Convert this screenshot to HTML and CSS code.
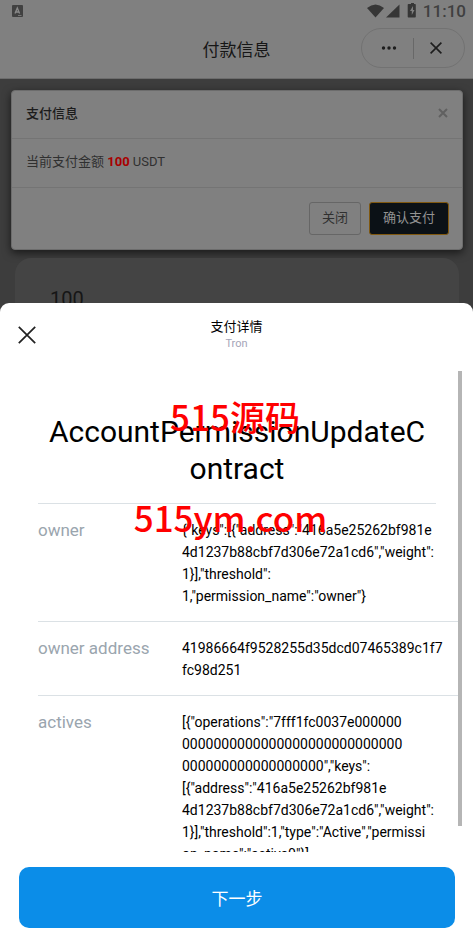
FILE: index.html
```html
<!DOCTYPE html>
<html lang="zh-CN">
<head>
<meta charset="utf-8">
<meta name="viewport" content="width=device-width, initial-scale=1">
<title>付款信息</title>
<link rel="stylesheet" href="styles.css">
</head>
<body>
<div class="page">
  <header class="top">
    <div class="status">
      <svg class="status-app" width="11" height="12" viewBox="0 0 11 12" aria-hidden="true"><rect width="11" height="12" rx="1" fill="#414141"/><path d="M3 8.5 5.3 3l2.3 5.500M3.800 7h3" fill="none" stroke="#8a8a8a" stroke-width="1.300"/><path d="M6 10.500h3.500" stroke="#777" stroke-width="1"/></svg>
      <svg width="50" height="16" viewBox="0 0 50 16" aria-hidden="true" fill="#363636"><path d="M0 5Q8.500-2 17 5L8.500 14.500Z"/><path d="M19 14.500h13.500V1.500Z"/><path d="M42 1h2V0h3v1h1q.8 0 .8.8v11.900q0 .8-.8.800h-6.500q-.8 0-.8-.8V1.800q0-.8.800-.8Z"/><path d="M46 3 43 8h1.800v4L47.500 7H46Z" fill="#808080"/></svg>
      <time class="clock">11:10</time>
    </div>
    <div class="nav">
      <h1 class="nav-title">付款信息</h1>
      <div class="capsule">
        <button class="icon-button" aria-label="更多"><svg width="16" height="4" viewBox="0 0 16 4" fill="#1d1d1d"><circle cx="2.500" cy="2" r="1.700"/><circle cx="8" cy="2" r="1.700"/><circle cx="13.500" cy="2" r="1.700"/></svg></button>
        <span class="capsule-line"></span>
        <button class="icon-button" aria-label="退出"><svg width="12" height="12" viewBox="0 0 12 12" fill="none" stroke="#1d1d1d" stroke-width="1.600"><path d="m.6.6 10.800 10.800M11.400.6.6 11.400"/></svg></button>
      </div>
    </div>
  </header>
  <main class="content">
    <section class="dialog">
      <div class="dialog-head">
        <h2 class="dialog-title">支付信息</h2>
        <button class="icon-button" aria-label="关闭对话框"><svg width="10" height="10" viewBox="0 0 10 10" fill="none" stroke="#606060" stroke-width="2"><path d="m1 1 8 8M9 1 1 9"/></svg></button>
      </div>
      <p class="dialog-body">当前支付金额 <strong class="amount">100</strong> USDT</p>
      <div class="dialog-foot">
        <button class="button">关闭</button>
        <button class="button button-primary">确认支付</button>
      </div>
    </section>
    <div class="card">100</div>
  </main>
</div>
<section class="sheet">
  <header class="sheet-head">
    <button class="icon-button" aria-label="关闭详情"><svg width="18" height="18" viewBox="0 0 18 18" fill="none" stroke="#222" stroke-width="1.700"><path d="m.8.8 16.400 16.400M17.200.8.8 17.200"/></svg></button>
    <div class="sheet-heading">
      <h2 class="sheet-title">支付详情</h2>
      <p class="sheet-sub">Tron</p>
    </div>
  </header>
  <div class="scroll">
    <div class="details">
      <h3 class="contract">AccountPermissionUpdateC<br>ontract</h3>
      <dl class="rows">
        <div class="row row-first">
          <dt class="label">owner</dt>
          <dd class="value">{"keys":[{"address":"416a5e25262bf981e<br>4d1237b88cbf7d306e72a1cd6","weight":<br>1}],"threshold":<br>1,"permission_name":"owner"}</dd>
        </div>
        <div class="row">
          <dt class="label">owner address</dt>
          <dd class="value">41986664f9528255d35dcd07465389c1f7<br>fc98d251</dd>
        </div>
        <div class="row">
          <dt class="label">actives</dt>
          <dd class="value">[{"operations":"7fff1fc0037e000000<br>0000000000000000000000000000<br>000000000000000000","keys":<br>[{"address":"416a5e25262bf981e<br>4d1237b88cbf7d306e72a1cd6","weight":<br>1}],"threshold":1,"type":"Active","permissi<br>on_name":"active0"}]</dd>
        </div>
      </dl>
    </div>
    <div class="thumb"></div>
  </div>
  <button class="next">下一步</button>
  <div class="mark mark-name">515源码</div>
  <div class="mark mark-site">515ym.com</div>
</section>
</body>
</html>
```
FILE: styles.css
```css
* { box-sizing: border-box; }
body {
  margin: 0;
  height: 100vh;
  display: flex;
  flex-direction: column;
  overflow: hidden;
  background: #3d3d3d;
  color: #000;
  font-family: Roboto, "Noto Sans CJK SC", sans-serif;
}
h1, h2, h3, p, dl, dd { margin: 0; font-weight: 400; }
button { font: inherit; cursor: pointer; }
.icon-button { display: flex; padding: 0; border: 0; background: none; }

.top { background: #808080; border-bottom: 1px solid #6c6c6c; }
.status { display: flex; align-items: center; height: 22px; padding: 0 7px 0 12px; }
.status-app { margin-right: auto; }
.clock { margin-left: 6px; font-size: 17px; font-weight: 500; line-height: 22px; color: #404040; }
.nav {
  display: grid;
  grid-template-columns: 1fr auto 1fr;
  align-items: center;
  height: 56px;
  padding: 0 8px 4px;
}
.nav-title { grid-column: 2; padding-top: 4px; font-size: 17px; line-height: 24px; color: #161616; }
.capsule {
  display: flex;
  align-items: center;
  justify-content: space-between;
  justify-self: end;
  width: 104px;
  height: 40px;
  padding: 0 22px 0 19px;
  border: 1px solid #727272;
  border-radius: 20px;
}
.capsule-line { width: 1px; height: 21px; background: #686868; }

.content { padding: 11px 10px 0 11px; }
.dialog {
  background: #808080;
  border: 1px solid #6c6c6c;
  border-radius: 4px;
  box-shadow: 0 3px 9px rgba(0, 0, 0, .6);
  font-size: 13px;
  color: #303030;
}
.dialog-head {
  display: flex;
  align-items: center;
  justify-content: space-between;
  height: 48px;
  padding: 0 14px 4px;
  border-bottom: 1px solid #747474;
}
.dialog-title { font-size: 13px; font-weight: 500; color: #1c1c1c; }
.dialog-body { padding: 12px 14px 14px; line-height: 22px; border-bottom: 1px solid #747474; }
.amount { font-weight: 700; color: #a80000; }
.dialog-foot { display: flex; justify-content: flex-end; gap: 8px; padding: 14px 13px; }
.button {
  height: 33px;
  padding: 0 12px 4px;
  border: 1px solid #666;
  border-radius: 3px;
  background: #808080;
  color: #303030;
}
.button-primary { padding: 0 13px 4px; border: 1px solid #80580f; background: #0b1116; color: #929292; }
.card {
  height: 56px;
  margin: 8px 4px 0;
  padding: 26px 35px 0;
  border-radius: 16px 16px 0 0;
  background: #444;
  overflow: hidden;
  font-size: 20px;
  line-height: 30px;
  color: #161616;
}

.sheet {
  position: relative;
  display: flex;
  flex: 1;
  flex-direction: column;
  min-height: 0;
  margin-top: -11px;
  padding-bottom: 16px;
  border-radius: 9px 9px 0 0;
  background: #fff;
}
.sheet-head {
  display: grid;
  grid-template-columns: 1fr auto 1fr;
  align-items: center;
  height: 63px;
  padding: 0 18px;
}
.sheet-heading { text-align: center; }
.sheet-title { font-size: 13px; line-height: 18px; }
.sheet-sub { font-size: 11px; line-height: 16px; color: #a5a5b8; }
.scroll {
  display: flex;
  flex: 1;
  min-height: 0;
  margin-top: 5px;
  padding-right: 11px;
  overflow: hidden;
}
.details { flex: 1; min-width: 0; padding: 42px 0 0 38px; }
.contract { margin-right: 22px; padding-bottom: 16px; font-size: 30px; line-height: 37px; text-align: center; }
.row {
  display: grid;
  grid-template-columns: 144px 1fr;
  padding: 15px 0 14px;
  border-top: 1px solid #dbe1e5;
  line-height: 22px;
}
.row-first { margin-right: 22px; }
.label { font-size: 17px; color: #9aa5ae; }
.value { font-size: 14px; white-space: nowrap; }
.thumb { width: 4px; height: 455px; background: #b5b5b5; }
.next {
  height: 61px;
  margin: 15px 18px 0 19px;
  border: 0;
  border-radius: 10px;
  background: #0b8de8;
  color: #fff;
  font-size: 17px;
}
.mark {
  position: absolute;
  left: 0;
  right: 0;
  font-family: "Noto Sans CJK SC", sans-serif;
  font-size: 35px;
  font-weight: 500;
  line-height: 50px;
  text-align: center;
  color: #f00;
  pointer-events: none;
}
.mark-name { top: 88px; right: 3px; }
.mark-site { top: 189px; right: 12px; }
```
